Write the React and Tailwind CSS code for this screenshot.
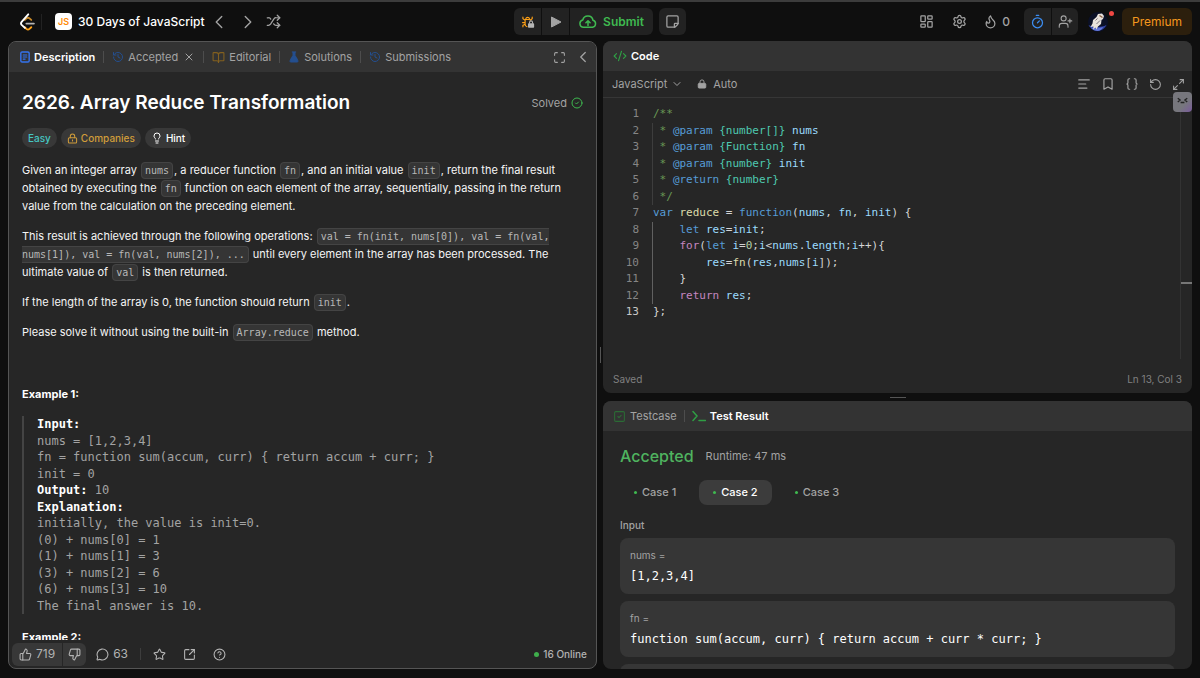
import React, { useState } from 'react'
import {
  AlignLeft,
  Bookmark,
  BookOpen,
  Braces,
  ChevronDown,
  ChevronLeft,
  ChevronRight,
  CircleCheck,
  CircleQuestionMark,
  CodeXml,
  Flame,
  FlaskConical,
  History,
  LayoutDashboard,
  Lightbulb,
  Maximize,
  Maximize2,
  MessageCircle,
  RotateCcw,
  Settings,
  Shuffle,
  SquareArrowOutUpRight,
  SquareCheck,
  Star,
  StickyNote,
  ThumbsDown,
  ThumbsUp,
  Timer,
  UserPlus,
  X,
} from 'lucide-react'

const Logo = () => (
  <svg viewBox="0 0 20 24" className="h-[18px] w-[15px]" fill="none" strokeWidth="2.5" strokeLinecap="round" strokeLinejoin="round">
    <path d="M6.5 9.200 8.600 7.200c1.200-1 2.900-1 4.100 0l2.300 2" stroke="#c98a2a" />
    <path d="m6.500 19 2.100 2.100c1.200 1.100 2.900 1.100 4.100 0l2.300-2.100" stroke="#ffa116" />
    <path d="M11 1.800 2.200 11.800c-1 1.200-1 2.900 0 4.100l4.300 4" stroke="#fff" />
    <path d="M8.500 14.100h10" stroke="#b3b3b3" />
  </svg>
)

const DebugIcon = () => (
  <svg viewBox="0 0 16 16" className="h-[14px] w-[14px]" fill="none" strokeLinecap="round">
    <path d="M5.500 4.200a2.200 2.200 0 0 1 4.200 0M4.700 5.200h5.500M4.700 5.500v5c0 1.600 1 2.600 2.200 2.900M2.200 2.500v1.700l2.500 1.800M12.800 2.500v1.700L10.500 6M4.500 8.700H1.800M2.200 13.500v-1.700l2.500-1.300" stroke="#ffa116" strokeWidth="1.300" />
    <rect x="8" y="9.500" width="7" height="5" rx="0.800" fill="#b5b5b5" />
    <path d="M9.800 9.500V8.400a1.700 1.700 0 0 1 3.400 0v1.100" stroke="#b5b5b5" strokeWidth="1.200" />
  </svg>
)

const PlayIcon = () => (
  <svg viewBox="0 0 12 12" className="h-3 w-3" fill="currentColor" stroke="currentColor" strokeLinejoin="round">
    <path d="M1.500 1v10L11 6z" />
  </svg>
)

const CloudIcon = () => (
  <svg viewBox="0 0 18 14" className="h-[14px] w-[18px]" fill="none" stroke="currentColor" strokeWidth="1.500" strokeLinecap="round" strokeLinejoin="round">
    <path d="M4.500 12.300a3.700 3.700 0 0 1-.700-7.300A5.200 5.200 0 0 1 14 5.300a3.600 3.600 0 0 1-.500 7z" />
    <path d="M9 10.500v-4.500M6.900 7.800 9 5.800l2.100 2" />
  </svg>
)

const LockIcon = ({ className, solid }) => (
  <svg viewBox="0 0 16 16" className={className} fill="none" stroke="currentColor" strokeWidth="1.500" strokeLinejoin="round" strokeLinecap="round">
    <rect x="2" y="7" width="12" height="7.500" rx="1.500" fill={solid ? 'currentColor' : 'none'} />
    <path d="M4.800 7V4.600a3.200 3.200 0 0 1 6.400 0V7" />
    {!solid && <path d="M8 10v1.500" />}
  </svg>
)

const DocIcon = () => (
  <svg viewBox="0 0 12 14" className="h-3 w-[10px]" fill="none" stroke="#3574f0" strokeWidth="1.700" strokeLinejoin="round" strokeLinecap="round">
    <rect x="1" y="1" width="10" height="12" rx="1.500" />
    <path d="M3.800 4.500h4.400M3.800 7h4.400M3.800 9.500h2.400" strokeWidth="1.300" />
  </svg>
)

const Avatar = () => (
  <svg viewBox="0 0 20 20" className="h-5 w-5">
    <circle cx="10" cy="10" r="10" fill="#0b1026" />
    <path d="M0.500 13c3 1.500 11 3.500 18 0a10 10 0 0 1-18 0z" fill="#3346a8" />
    <path d="M3 15.500c3 1.200 8 1.300 12-0.500-1 2.500-3 4-5.500 4S4.500 18 3 15.500z" fill="#6276d8" />
    <path d="m5 8 3.500-3 1.500-3 4-.500 2 2.500-1 3-1.500 1-.500 4-3 2.500-1.500 3-1-2-2.500 2 .500-3-3 .500 2-3.500z" fill="#e8e2dc" />
    <path d="m7.500 8.500 2-2M8.500 12l3.500-3.500" stroke="#7a7580" strokeWidth="1" />
    <path d="M11.500 3.500l3 2" stroke="#8a5f43" strokeWidth="1.400" />
  </svg>
)

const Divider = () => <span className="h-3 w-px bg-[#4d4d4d]" />

const Tab = ({ icon, active, children }) => (
  <button className={`flex items-center gap-1 ${active ? 'font-semibold text-white' : 'text-[#a3a3a3]'}`}>
    {icon}
    {children}
  </button>
)

const InlineCode = ({ children }) => (
  <code className="mx-px rounded border border-[#444] bg-[#353535] px-[3px] py-[2px] font-['DejaVu_Sans_Mono',monospace] text-[10px] leading-none text-[#b8b8b8]">{children}</code>
)

const Header = () => (
  <header className="flex h-[39px] shrink-0 items-center justify-between px-2 text-[#a3a3a3]">
    <div className="flex flex-1 items-center">
      <a href="#home" aria-label="Home" className="ml-3"><Logo /></a>
      <span className="ml-[6px] h-4 w-px bg-[#222]" />
      <a href="#plan" className="ml-[13px] flex items-center gap-[6px] text-xs font-medium text-white">
        <span className="flex h-[17px] w-[17px] items-center justify-center rounded bg-white text-[9px] font-semibold text-orange-400">JS</span>
        30 Days of JavaScript
      </a>
      <div className="ml-1 flex items-center gap-[7px]">
        <button aria-label="Previous"><ChevronLeft size={22} strokeWidth={1.5} /></button>
        <button aria-label="Next"><ChevronRight size={22} strokeWidth={1.5} /></button>
        <button aria-label="Shuffle"><Shuffle size={15} strokeWidth={2} /></button>
      </div>
    </div>

    <div className="flex h-[27px] gap-[6px]">
      <div className="flex gap-px overflow-hidden rounded-md">
        <button aria-label="Debug" className="flex w-[27px] items-center justify-center bg-[#222]"><DebugIcon /></button>
        <button aria-label="Run" className="flex w-[27px] items-center justify-center bg-[#222]"><PlayIcon /></button>
        <button className="flex items-center gap-[6px] bg-[#222] px-[9px] text-xs font-semibold text-[#3fb950]">
          <CloudIcon />
          Submit
        </button>
      </div>
      <button aria-label="Notes" className="flex w-[27px] items-center justify-center rounded-md bg-[#222]"><StickyNote size={15} className="-scale-y-100" /></button>
    </div>

    <div className="flex flex-1 items-center justify-end">
      <button aria-label="Layout"><LayoutDashboard size={15} /></button>
      <button aria-label="Settings" className="ml-[18px]"><Settings size={15} /></button>
      <button className="ml-4 flex items-center gap-1 text-xs font-medium"><Flame size={15} /> 0</button>
      <div className="ml-[14px] flex h-[27px] gap-px overflow-hidden rounded-md">
        <button aria-label="Timer" className="flex w-[27px] items-center justify-center bg-[#222] text-[#3b8cf0]"><Timer size={15} /></button>
        <button aria-label="Invite" className="flex w-[26px] items-center justify-center bg-[#222]"><UserPlus size={15} strokeWidth={1.75} /></button>
      </div>
      <button aria-label="Profile" className="relative ml-[10px]">
        <Avatar />
        <span className="absolute -top-[1px] -right-[6px] h-[5px] w-[5px] rounded-full bg-[#ef4743]" />
      </button>
      <a href="#premium" className="ml-[14px] flex h-[27px] items-center rounded-md bg-[#2c1f0d] px-[10px] text-xs text-[#f5971d]">Premium</a>
    </div>
  </header>
)

const Description = () => (
  <section className="flex min-h-0 min-w-0 flex-col overflow-hidden rounded-lg border border-[#555] bg-[#262626]">
    <div className="flex h-[30px] shrink-0 items-center justify-between bg-[#333] pr-1 pl-[11px] text-[11px] text-[#a3a3a3]">
      <div className="flex items-center gap-2">
        <Tab active icon={<DocIcon />}>Description</Tab>
        <Divider />
        <Tab icon={<History size={12} color="#244f8f" />}>Accepted <X size={12} className="ml-px" /></Tab>
        <Divider />
        <Tab icon={<BookOpen size={13} color="#83601f" />}>Editorial</Tab>
        <Divider />
        <Tab icon={<FlaskConical size={12} color="#244f8f" fill="#244f8f" />}>Solutions</Tab>
        <Divider />
        <Tab icon={<History size={12} color="#244f8f" />}>Submissions</Tab>
      </div>
      <div className="flex items-center gap-2">
        <button aria-label="Full screen"><Maximize size={13} /></button>
        <button aria-label="Collapse"><ChevronLeft size={18} strokeWidth={1.75} /></button>
      </div>
    </div>

    <div className="min-h-0 flex-1 overflow-hidden px-[13px] pt-[19px]">
      <div className="flex items-center justify-between">
        <h1 className="text-[19px] leading-6 font-semibold text-white">2626. Array Reduce Transformation</h1>
        <span className="flex items-center gap-1 text-[11px] text-[#a3a3a3]">Solved <CircleCheck size={12} color="#3fb950" /></span>
      </div>

      <div className="mt-[13px] flex gap-1 text-[10px] font-medium">
        <span className="flex h-5 items-center rounded-full bg-[#383838] px-[6px] text-[#46c6c2]">Easy</span>
        <button className="flex h-5 items-center gap-[3px] rounded-full bg-[#383838] px-[6px] text-[#d19d3a]"><LockIcon className="h-[11px] w-[11px]" />Companies</button>
        <button className="flex h-5 items-center gap-[3px] rounded-full bg-[#383838] px-[6px] text-white"><Lightbulb size={12} />Hint</button>
      </div>

      <div className="mt-[13px] flex flex-col gap-3 text-[11px] leading-[18px] text-[#f5f5f5]">
        <p>
          Given an integer array <InlineCode>nums</InlineCode>, a reducer function <InlineCode>fn</InlineCode>, and an initial value <InlineCode>init</InlineCode>, return the final result obtained by executing the <InlineCode>fn</InlineCode> function on each element of the array, sequentially, passing in the return value from the calculation on the preceding element.
        </p>
        <p>
          This result is achieved through the following operations: <InlineCode>val = fn(init, nums[0]), val = fn(val, nums[1]), val = fn(val, nums[2]), ...</InlineCode> until every element in the array has been processed. The ultimate value of <InlineCode>val</InlineCode> is then returned.
        </p>
        <p>If the length of the array is 0, the function should return <InlineCode>init</InlineCode>.</p>
        <p>Please solve it without using the built-in <InlineCode>Array.reduce</InlineCode> method.</p>
        <p>&nbsp;</p>
        <p className="pt-[2px] font-bold text-white">Example 1:</p>
        <pre className="mt-px border-l-2 border-[#444] pl-[13px] font-['DejaVu_Sans_Mono',monospace] text-xs leading-snug text-[#a3a3a3]">
          <b className="text-white">Input:</b>{'\n'}
          nums = [1,2,3,4]{'\n'}
          fn = function sum(accum, curr) {'{'} return accum + curr; {'}'}{'\n'}
          init = 0{'\n'}
          <b className="text-white">Output:</b> 10{'\n'}
          <b className="text-white">Explanation:</b>{'\n'}
          initially, the value is init=0.{'\n'}
          (0) + nums[0] = 1{'\n'}
          (1) + nums[1] = 3{'\n'}
          (3) + nums[2] = 6{'\n'}
          (6) + nums[3] = 10{'\n'}
          The final answer is 10.
        </pre>
        <p className="pt-[2px] font-bold text-white">Example 2:</p>
      </div>
    </div>

    <footer className="flex h-7 shrink-0 items-center justify-between pr-[9px] pl-[3px] text-[#b3b3b3]">
      <div className="flex items-center text-xs">
        <div className="flex h-[23px] gap-px overflow-hidden rounded-md">
          <button className="flex items-center gap-1 bg-[#383838] px-[7px]"><ThumbsUp size={13} />719</button>
          <button aria-label="Dislike" className="flex w-[23px] items-center justify-center bg-[#383838]"><ThumbsDown size={13} /></button>
        </div>
        <button className="ml-[10px] flex items-center gap-1"><MessageCircle size={13} />63</button>
        <span className="mx-3 h-3 w-px bg-[#3d3d3d]" />
        <div className="flex items-center gap-[17px]">
          <button aria-label="Favorite"><Star size={13} /></button>
          <button aria-label="Share"><SquareArrowOutUpRight size={13} /></button>
          <button aria-label="Help"><CircleQuestionMark size={13} /></button>
        </div>
      </div>
      <span className="flex items-center gap-1 text-[10px] font-medium"><span className="h-[5px] w-[5px] rounded-full bg-[#3fae4c]" />16 Online</span>
    </footer>
  </section>
)

// token colours: c comment, k keyword, t type, v variable, f function, r control flow, n number, p punctuation
const colors = {
  c: 'text-[#6a9955]',
  k: 'text-[#569cd6]',
  t: 'text-[#4ec9b0]',
  v: 'text-[#9cdcfe]',
  f: 'text-[#dcdcaa]',
  r: 'text-[#c586c0]',
  n: 'text-[#b5cea8]',
  p: 'text-[#d4d4d4]',
}

const code = [
  [['c', '/**']],
  [['c', ' * '], ['k', '@param'], ['t', ' {number[]}'], ['v', ' nums']],
  [['c', ' * '], ['k', '@param'], ['t', ' {Function}'], ['v', ' fn']],
  [['c', ' * '], ['k', '@param'], ['t', ' {number}'], ['v', ' init']],
  [['c', ' * '], ['k', '@return'], ['t', ' {number}']],
  [['c', ' */']],
  [['k', 'var'], ['f', ' reduce'], ['p', ' = '], ['k', 'function'], ['p', '('], ['v', 'nums'], ['p', ', '], ['v', 'fn'], ['p', ', '], ['v', 'init'], ['p', ') {']],
  [['k', '    let'], ['v', ' res'], ['p', '='], ['v', 'init'], ['p', ';']],
  [['r', '    for'], ['p', '('], ['k', 'let'], ['v', ' i'], ['p', '='], ['n', '0'], ['p', ';'], ['v', 'i'], ['p', '<'], ['v', 'nums'], ['p', '.'], ['v', 'length'], ['p', ';'], ['v', 'i'], ['p', '++){']],
  [['v', '        res'], ['p', '='], ['f', 'fn'], ['p', '('], ['v', 'res'], ['p', ','], ['v', 'nums'], ['p', '['], ['v', 'i'], ['p', ']);']],
  [['p', '    }']],
  [['r', '    return'], ['v', ' res'], ['p', ';']],
  [['p', '};']],
]

const CodePanel = () => (
  <section className="flex min-h-0 flex-[352] flex-col overflow-hidden rounded-lg bg-[#262626]">
    <div className="flex h-[30px] shrink-0 items-center bg-[#333] px-[10px] text-[11px]">
      <Tab active icon={<CodeXml size={14} color="#2f9e44" />}>Code</Tab>
    </div>
    <div className="flex h-[27px] shrink-0 items-center justify-between border-b border-[#363636] pr-[7px] pl-[9px] text-[11px] text-[#a3a3a3]">
      <div className="flex items-center gap-[14px]">
        <button className="flex items-center gap-1">JavaScript <ChevronDown size={12} /></button>
        <button className="flex items-center gap-[6px]"><LockIcon solid className="h-[10px] w-[10px]" />Auto</button>
      </div>
      <div className="flex items-center gap-[10px]">
        <button aria-label="Format"><AlignLeft size={14} /></button>
        <button aria-label="Bookmark"><Bookmark size={14} /></button>
        <button aria-label="Snippets"><Braces size={14} /></button>
        <button aria-label="Reset"><RotateCcw size={13} /></button>
        <button aria-label="Expand"><Maximize2 size={13} /></button>
      </div>
    </div>
    <div className="relative min-h-0 flex-1 pt-2 font-['DejaVu_Sans_Mono',monospace] text-[11px] leading-normal">
      {code.map((line, i) => (
        <div key={i} className="flex whitespace-pre">
          <span className={`w-9 text-right ${i === 12 ? 'text-[#c6c6c6]' : 'text-[#858585]'}`}>{i + 1}</span>
          <span className={`ml-[13px] border-l ${(i > 0 && i < 6) ? 'border-[#3d3d3d]' : i > 6 && i < 12 ? 'border-[#606060]' : 'border-transparent'}`}>
            {line.map(([kind, text], j) => <span key={j} className={colors[kind]}>{text}</span>)}
          </span>
        </div>
      ))}
      <span className="absolute top-0 right-[11px] bottom-3 w-px bg-[#333]" />
      <span className="absolute top-[184px] right-0 h-[2px] w-[11px] bg-[#777]" />
      <button aria-label="Assistant" className="absolute -top-[6px] right-0 flex h-5 w-[19px] justify-center rounded-sm bg-linear-to-br from-[#77777d] from-60% to-[#7a5a9c]">
        <svg viewBox="0 0 20 20" className="h-5 w-5" fill="none" stroke="#222" strokeWidth="1.400"><path d="m5 6 2.500 2L5 10M15 6l-2.500 2 2.500 2M8 10.500h4" /></svg>
      </button>
    </div>
    <div className="flex shrink-0 justify-between px-[10px] pb-[6px] text-[10px] leading-4 text-[#808080]">
      <span>Saved</span>
      <span>Ln 13, Col 3</span>
    </div>
  </section>
)

const Field = ({ name, value }) => (
  <div className="shrink-0 rounded-lg bg-[#363636] px-[10px] py-[9px]">
    <div className="text-[10px] leading-4 text-[#a3a3a3]">{name} =</div>
    <div className="mt-1 font-['DejaVu_Sans_Mono',monospace] text-xs leading-[18px] text-white">{value}</div>
  </div>
)

const ResultPanel = () => {
  const [selected, setSelected] = useState(2)

  return (
    <section className="flex min-h-0 flex-[268] flex-col overflow-hidden rounded-lg bg-[#262626]">
      <div className="flex h-[30px] shrink-0 items-center gap-[7px] bg-[#333] px-[10px] text-[11px]">
        <Tab icon={<SquareCheck size={13} color="#2b6b35" />}>Testcase</Tab>
        <Divider />
        <Tab
          active
          icon={<svg viewBox="0 0 14 12" className="h-3 w-[14px]" fill="none" stroke="#2f9e44" strokeWidth="1.500" strokeLinecap="round"><path d="m1 1.500 4 4.500-4 4.500M7 10.500h6.500" /></svg>}
        >
          Test Result
        </Tab>
      </div>
      <div className="flex min-h-0 flex-1 flex-col overflow-hidden px-[17px] pt-[13px]">
        <div className="flex shrink-0 items-center gap-3">
          <h2 className="text-base leading-6 font-medium text-[#4fb35f]">Accepted</h2>
          <span className="text-[11px] text-[#a3a3a3]">Runtime: 47 ms</span>
        </div>
        <div className="mt-3 flex shrink-0 gap-[9px]">
          {[1, 2, 3].map((n) => (
            <button
              key={n}
              onClick={() => setSelected(n)}
              className={`flex h-[25px] items-center gap-[5px] rounded-lg px-[14px] text-[11px] font-medium ${selected === n ? 'bg-[#3c3c3c] text-white' : 'text-[#a3a3a3]'}`}
            >
              <span className="h-[3px] w-[3px] rounded-full bg-[#3fb950]" />
              Case {n}
            </button>
          ))}
        </div>
        <div className="mt-3 mb-[5px] shrink-0 text-[10px] leading-4 font-medium text-[#a3a3a3]">Input</div>
        <div className="flex min-h-0 flex-col gap-[7px]">
          <Field name="nums" value="[1,2,3,4]" />
          <Field name="fn" value="function sum(accum, curr) { return accum + curr * curr; }" />
          {/* next field peeks in below the fold */}
          <div className="h-14 shrink-0 rounded-lg bg-[#363636]" />
        </div>
      </div>
    </section>
  )
}

export default function App() {
  return (
    <div className="flex h-screen flex-col overflow-hidden border-t-2 border-[#3c3c3c] bg-[#0f0f0f] font-['Inter',sans-serif]">
      <Header />
      <main className="grid min-h-0 flex-1 grid-cols-[1fr_6px_1fr] grid-rows-[minmax(0,1fr)] px-2 pb-[9px]">
        <Description />
        <div className="flex items-center justify-center"><span className="h-4 w-px bg-[#555]" /></div>
        <div className="flex min-h-0 min-w-0 flex-col">
          <CodePanel />
          <div className="flex h-2 shrink-0 items-center justify-center"><span className="h-px w-4 bg-[#555]" /></div>
          <ResultPanel />
        </div>
      </main>
    </div>
  )
}
